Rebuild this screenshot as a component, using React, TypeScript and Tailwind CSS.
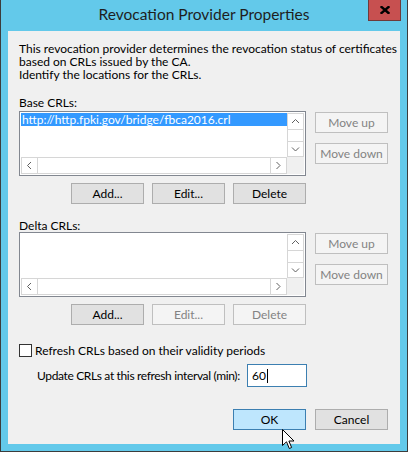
import React from "react";

const font = { fontFamily: 'Lato, "Noto Sans", sans-serif' };

function Btn({ children, kind = "normal", className = "" }: { children: React.ReactNode; kind?: "normal" | "disabled" | "default"; className?: string }) {
  const styles =
    kind === "disabled"
      ? "bg-[#f4f4f4] border-[#bfbfbf] text-[#838383]"
      : kind === "default"
      ? "bg-[#bee6fd] border-[#3c7fb1] text-black"
      : "bg-[#e1e1e1] border-[#adadad] text-black";
  return (
    <div className={`w-[73px] h-[21px] border flex items-center justify-center text-[12px] leading-none whitespace-nowrap ${styles} ${className}`}>
      {children}
    </div>
  );
}

function Chevron({ dir }: { dir: "up" | "down" | "left" | "right" }) {
  const pts: Record<string, string> = {
    up: "1,5 4.5,1.5 8,5",
    down: "1,1.5 4.5,5 8,1.5",
    left: "5,1 1.5,4.5 5,8",
    right: "1.5,1 5,4.5 1.5,8",
  };
  const vertical = dir === "up" || dir === "down";
  return (
    <svg width={vertical ? 9 : 7} height={vertical ? 7 : 9} viewBox={vertical ? "0 0 9 7" : "0 0 7 9"}>
      <polyline points={pts[dir]} fill="none" stroke="#606060" strokeWidth="1" />
    </svg>
  );
}

function ListBox({ item }: { item?: string }) {
  return (
    <div className="w-[287px] h-[65px] border border-[#828790] bg-white p-px">
      <div className="grid grid-cols-[266px_17px] grid-rows-[44px_17px] w-[283px] h-[61px]">
        <div className="relative">
          {item && (
            <div className="h-[13px] bg-[#3399ff] text-white text-[12px] leading-[13px] pl-px whitespace-nowrap">{item}</div>
          )}
        </div>
        <div className="flex flex-col border border-[#d6d6d6] bg-white">
          <div className="h-[16px] flex items-center justify-center border-b border-[#d6d6d6]">
            <Chevron dir="up" />
          </div>
          <div className="flex-1" />
          <div className="h-[15px] flex items-center justify-center border-t border-[#d6d6d6]">
            <Chevron dir="down" />
          </div>
        </div>
        <div className="flex border border-[#d6d6d6] bg-white">
          <div className="w-[16px] flex items-center justify-center border-r border-[#d6d6d6]">
            <Chevron dir="left" />
          </div>
          <div className="flex-1" />
          <div className="w-[16px] flex items-center justify-center border-l border-[#d6d6d6]">
            <Chevron dir="right" />
          </div>
        </div>
        <div className="bg-[#f0f0f0]" />
      </div>
    </div>
  );
}

function CrlSection({ item, editEnabled }: { item?: string; editEnabled: boolean }) {
  return (
    <>
      <div className="flex gap-[9px]">
        <ListBox item={item} />
        <div className="flex flex-col gap-[10px] pt-px">
          <Btn kind="disabled">Move up</Btn>
          <Btn kind="disabled">Move down</Btn>
        </div>
      </div>
      <div className="flex justify-end gap-[8px] w-[287px] mt-[7px]">
        <Btn>Add...</Btn>
        <Btn kind={editEnabled ? "normal" : "disabled"}>Edit...</Btn>
        <Btn kind={editEnabled ? "normal" : "disabled"}>Delete</Btn>
      </div>
    </>
  );
}

export default function App() {
  return (
    <div style={font} className="relative w-[408px] h-[452px] bg-[#63c9ea] border-l border-r border-b border-[#3c3c3c] flex flex-col text-black overflow-hidden">
      <div className="h-[31px] flex items-center justify-center relative">
        <span className="text-[15.5px] text-[#1e1e1e] leading-none -mt-px whitespace-nowrap">Revocation Provider Properties</span>
        <div className="absolute top-0 right-[6px] w-[33px] h-[21px] bg-[#c75050] border border-[#6e3a3a] border-t-0 flex items-center justify-center">
          <svg width="10" height="8" viewBox="0 0 10 8">
            <path d="M1.5 1 L8.5 7 M8.5 1 L1.5 7" stroke="#000" strokeWidth="2.4" strokeLinecap="square" />
          </svg>
        </div>
      </div>
      <div className="ml-[7px] w-[392px] h-[413px] bg-[#f0f0f0] pl-[11px] pr-[12px] pt-[11px] text-[12px]">
        <div className="whitespace-nowrap">
          <div className="h-[13px] leading-[13px]">This revocation provider determines the revocation status of certificates</div>
          <div className="h-[13px] leading-[13px]">based on CRLs issued by the CA.</div>
          <div className="h-[13px] leading-[13px]">Identify the locations for the CRLs.</div>
        </div>
        <div className="leading-[13px] mt-[15px] mb-[2px]">Base CRLs:</div>
        <CrlSection item="http://http.fpki.gov/bridge/fbca2016.crl" editEnabled />
        <div className="leading-[13px] mt-[15px]">Delta CRLs:</div>
        <CrlSection editEnabled={false} />
        <div className="flex items-center h-[13px] mt-[19px]">
          <div className="w-[13px] h-[13px] border border-[#333] bg-white" />
          <span className="ml-[3px] leading-none whitespace-nowrap">Refresh CRLs based on their validity periods</span>
        </div>
        <div className="flex items-center mt-[7px] h-[23px]">
          <span className="ml-[18px] w-[210px] leading-none whitespace-nowrap tracking-[-0.35px]">Update CRLs at this refresh interval (min):</span>
          <div className="w-[60px] h-[23px] border border-[#3c7fb1] bg-white flex items-center pl-[4px]">
            <span className="leading-none">60</span>
            <span className="w-px h-[14px] bg-black ml-px" />
          </div>
        </div>
        <div className="flex justify-end gap-[9px] mt-[22px]">
          <Btn kind="default">OK</Btn>
          <Btn>Cancel</Btn>
        </div>
      </div>
      <svg className="absolute left-[281px] top-[429px]" width="13" height="21" viewBox="0 0 13 21">
        <path d="M0.5 0.5 L0.5 16.5 L4.5 12.8 L7.3 19.5 L9.6 18.5 L6.9 12 L12 12 Z" fill="#fff" stroke="#000" strokeWidth="1" strokeLinejoin="miter" />
      </svg>
    </div>
  );
}
